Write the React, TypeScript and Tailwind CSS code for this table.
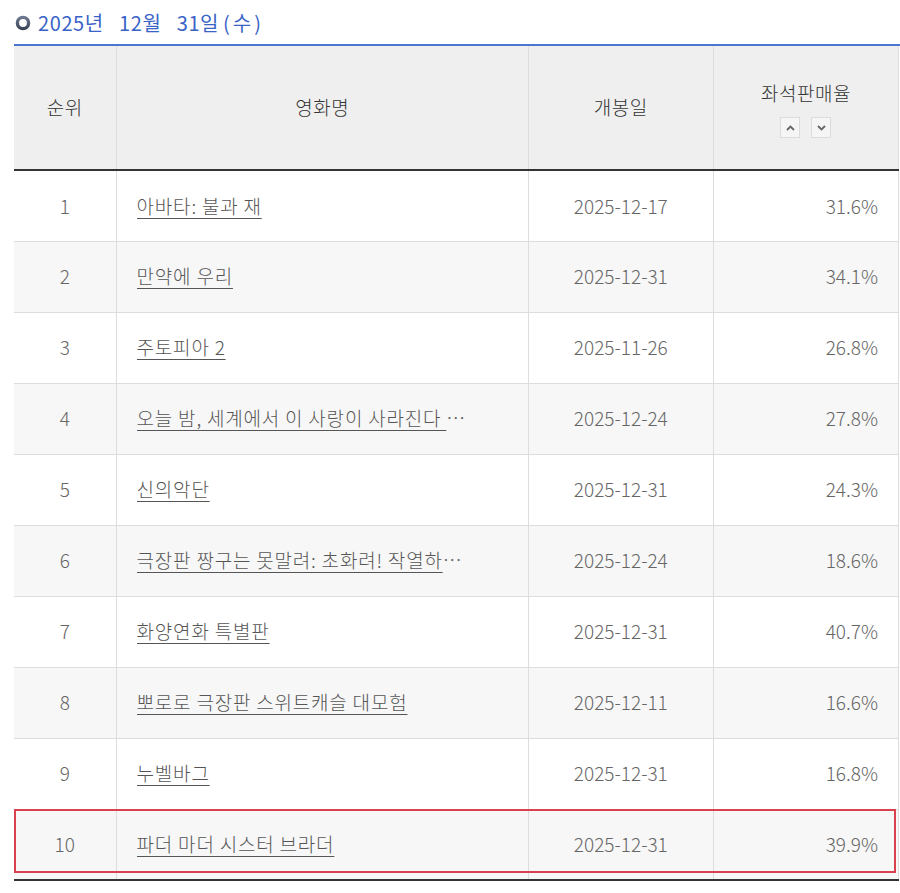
import React from "react";

type Row = {
  rank: number;
  title: string;
  open: string;
  rate: string;
};

const rows: Row[] = [
  { rank: 1, title: "아바타: 불과 재", open: "2025-12-17", rate: "31.6%" },
  { rank: 2, title: "만약에 우리", open: "2025-12-31", rate: "34.1%" },
  { rank: 3, title: "주토피아 2", open: "2025-11-26", rate: "26.8%" },
  { rank: 4, title: "오늘 밤, 세계에서 이 사랑이 사라진다 해도", open: "2025-12-24", rate: "27.8%" },
  { rank: 5, title: "신의악단", open: "2025-12-31", rate: "24.3%" },
  { rank: 6, title: "극장판 짱구는 못말려: 초화려! 작열하는 떡잎마을 댄서즈", open: "2025-12-24", rate: "18.6%" },
  { rank: 7, title: "화양연화 특별판", open: "2025-12-31", rate: "40.7%" },
  { rank: 8, title: "뽀로로 극장판 스위트캐슬 대모험", open: "2025-12-11", rate: "16.6%" },
  { rank: 9, title: "누벨바그", open: "2025-12-31", rate: "16.8%" },
  { rank: 10, title: "파더 마더 시스터 브라더", open: "2025-12-31", rate: "39.9%" },
];

function SortButton({ up }: { up?: boolean }) {
  return (
    <button className="flex h-[21px] w-[20px] items-center justify-center border border-[#dcdcdc] bg-[#f5f5f5]">
      <svg width="9" height="6" viewBox="0 0 9 6">
        <path
          d={up ? "M1 5 L4.5 1.5 L8 5" : "M1 1 L4.5 4.5 L8 1"}
          fill="none"
          stroke="#666"
          strokeWidth="1.8"
        />
      </svg>
    </button>
  );
}

export default function App() {
  return (
    <div className="min-h-[893px] bg-white font-['Noto_Sans_CJK_KR','Noto_Sans',sans-serif]">
      <div className="flex h-[44px] items-center gap-[7px] pl-[15px] pt-[1px]">
        <svg width="16" height="16" viewBox="0 0 16 16">
          <defs>
            <linearGradient id="ring" x1="0" y1="0" x2="0" y2="1">
              <stop offset="0" stopColor="#6d7890" />
              <stop offset="1" stopColor="#3c4559" />
            </linearGradient>
          </defs>
          <circle cx="8" cy="8" r="5.6" fill="none" stroke="url(#ring)" strokeWidth="3.4" />
        </svg>
        <h2 className="text-[20px] leading-none tracking-[0.6px] text-[#3a63c8]">
          2025년&nbsp;&nbsp; 12월&nbsp;&nbsp; 31일<span className="ml-[4px] tracking-[3px]">(수)</span>
        </h2>
      </div>

      <div className="relative ml-[14px] border-t-2 border-[#4a75d0]">
        <table className="w-[885px] table-fixed border-collapse border-r border-[#dddddd] text-[19px] font-light text-[#666]">
          <colgroup>
            <col className="w-[102px]" />
            <col className="w-[412px]" />
            <col className="w-[185px]" />
            <col className="w-[185px]" />
          </colgroup>
          <thead>
            <tr className="h-[124px] border-b-2 border-[#333] bg-[#efefef] text-[19px] tracking-[0.5px] text-[#333]">
              <th className="font-light">순위</th>
              <th className="border-l border-[#dddddd] font-light">영화명</th>
              <th className="border-l border-[#dddddd] font-light">개봉일</th>
              <th className="border-l border-[#dddddd] font-light">
                <div className="flex flex-col items-center gap-[10px] pt-[2px]">
                  <span>좌석판매율</span>
                  <div className="flex gap-[11px]">
                    <SortButton up />
                    <SortButton />
                  </div>
                </div>
              </th>
            </tr>
          </thead>
          <tbody>
            {rows.map((r, i) => (
              <tr
                key={r.rank}
                className={`h-[71px] ${
                  i === rows.length - 1 ? "border-b-2 border-[#333]" : "border-b border-[#dddddd]"
                } ${i % 2 === 1 ? "bg-[#f7f7f7]" : "bg-white"}`}
              >
                <td className="text-center">{r.rank}</td>
                <td className="border-l border-[#dddddd] pl-[20px]">
                  <div className="max-w-[334px] overflow-hidden text-ellipsis whitespace-nowrap">
                    <a
                      href="#"
                      className="tracking-[0.8px] text-[#555] underline decoration-[1px] underline-offset-[4px]"
                    >
                      {r.title}
                    </a>
                  </div>
                </td>
                <td className="border-l border-[#dddddd] text-center">{r.open}</td>
                <td className="border-l border-[#dddddd] pr-[20px] text-right">{r.rate}</td>
              </tr>
            ))}
          </tbody>
        </table>
        <div className="pointer-events-none absolute bottom-[8px] left-0 h-[64px] w-[882px] border-2 border-[#d9414f]" />
      </div>
    </div>
  );
}
